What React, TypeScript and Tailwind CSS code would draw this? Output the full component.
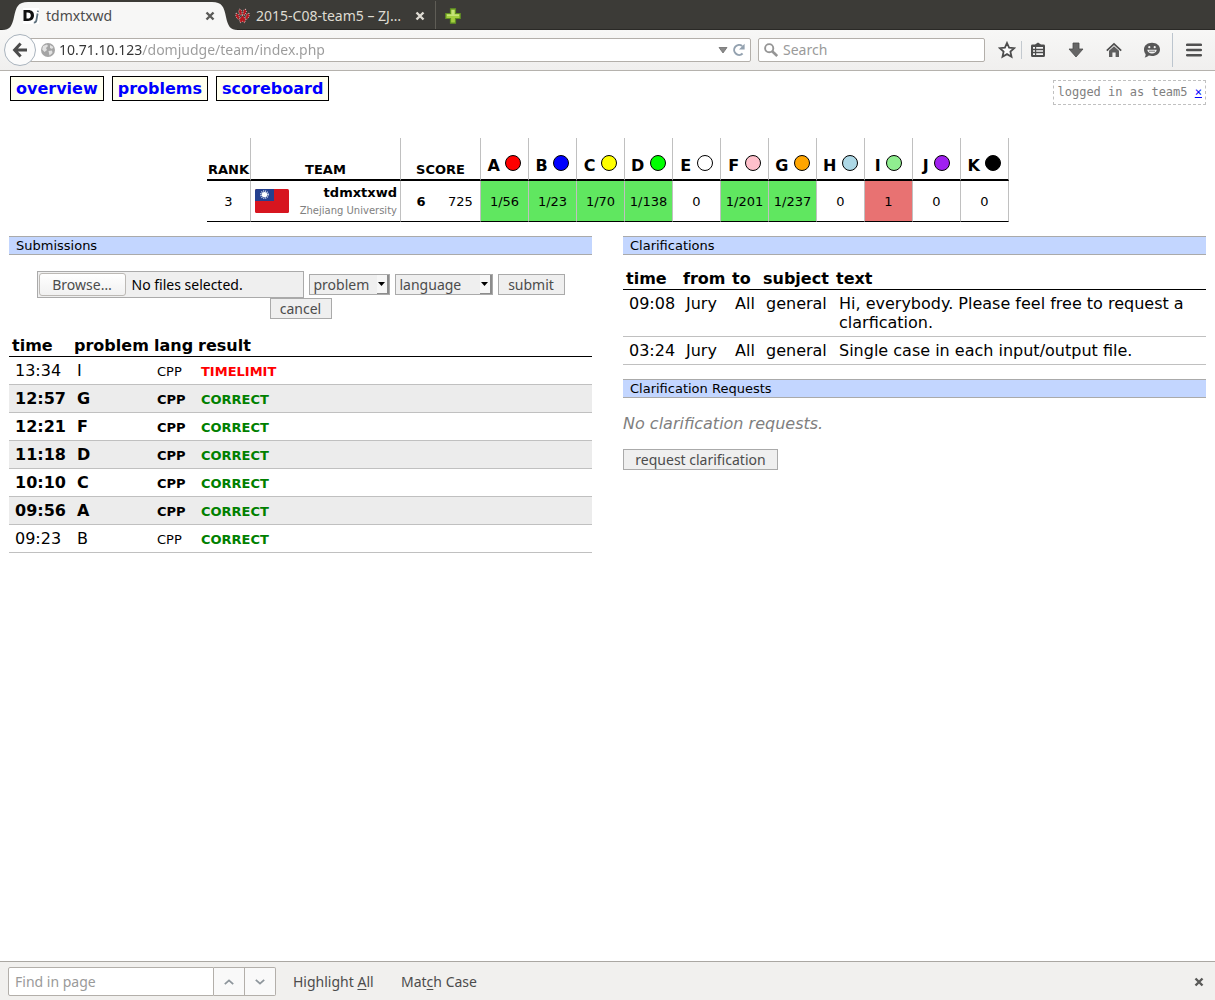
import React, { useRef, useState } from "react";

const teamProblems = [
  { label: "A", color: "#ff0000", result: "1/56", status: "correct" },
  { label: "B", color: "#0000ff", result: "1/23", status: "correct" },
  { label: "C", color: "#ffff00", result: "1/70", status: "correct" },
  { label: "D", color: "#00ff00", result: "1/138", status: "correct" },
  { label: "E", color: "#ffffff", result: "0", status: "none" },
  { label: "F", color: "#ffc0cb", result: "1/201", status: "correct" },
  { label: "G", color: "#ffa500", result: "1/237", status: "correct" },
  { label: "H", color: "#add8e6", result: "0", status: "none" },
  { label: "I", color: "#90ee90", result: "1", status: "incorrect" },
  { label: "J", color: "#a020f0", result: "0", status: "none" },
  { label: "K", color: "#000000", result: "0", status: "none" },
];

const statusClass: Record<string, string> = {
  correct: "bg-[#60e760]",
  incorrect: "bg-[#e87272]",
  none: "bg-white",
};

const submissions = [
  { time: "13:34", problem: "I", lang: "CPP", result: "TIMELIMIT", unseen: false },
  { time: "12:57", problem: "G", lang: "CPP", result: "CORRECT", unseen: true },
  { time: "12:21", problem: "F", lang: "CPP", result: "CORRECT", unseen: true },
  { time: "11:18", problem: "D", lang: "CPP", result: "CORRECT", unseen: true },
  { time: "10:10", problem: "C", lang: "CPP", result: "CORRECT", unseen: true },
  { time: "09:56", problem: "A", lang: "CPP", result: "CORRECT", unseen: true },
  { time: "09:23", problem: "B", lang: "CPP", result: "CORRECT", unseen: false },
];

const clarifications = [
  {
    time: "09:08",
    from: "Jury",
    to: "All",
    subject: "general",
    text: "Hi, everybody. Please feel free to request a clarfication.",
  },
  {
    time: "03:24",
    from: "Jury",
    to: "All",
    subject: "general",
    text: "Single case in each input/output file.",
  },
];

const CloseIcon = ({ color }: { color: string }) => (
  <svg width="10" height="10" viewBox="0 0 10 10">
    <path d="M1.5 1.5L8.5 8.5M8.5 1.5L1.5 8.5" stroke={color} strokeWidth="2.4" />
  </svg>
);

const TabBar = () => (
  <div className="flex h-[30px] items-end border-b border-[#2a2926] bg-[#3c3b37] text-sm">
    <div className="relative z-10 flex h-7 w-[232px] shrink-0 items-center pl-[23px] pr-[17px] pt-0.5">
      <svg
        className="absolute left-0 top-0"
        width="240"
        height="29"
        viewBox="0 0 240 29"
      >
        <path
          d="M2 29C10 29 12 25 14 16C16 6 18 1 28 1H212C222 1 224 6 226 16C228 25 230 29 238 29Z"
          fill="#f7f7f6"
        />
      </svg>
      <svg className="relative" width="17" height="16" viewBox="0 0 17 16">
        <rect width="16" height="16" fill="#fff" />
        <path
          d="M0.5 2H5.2C9 2 11 4.1 11 7.3C11 10.7 9 13 5 13H0.5ZM3.5 4.4V10.6H4.4C6.8 10.6 7.8 9.3 7.8 7.4C7.8 5.5 6.8 4.4 4.6 4.4Z"
          fill="#111"
        />
        <path
          d="M14.6 5.5L13.4 12.4Q13 14.7 10.8 14.6M15 2.6L14.8 4"
          stroke="#60737f"
          strokeWidth="1.8"
          fill="none"
        />
      </svg>
      <span className="relative ml-1.5 flex-1 text-[#4c4c4c]">tdmxtxwd</span>
      <button aria-label="Close tab" className="relative">
        <CloseIcon color="#5a5a58" />
      </button>
    </div>
    <div className="flex h-7 w-[204px] shrink-0 items-center border-r border-[#5f5d56] pl-[3px] pr-[10px] pt-0.5">
      <svg width="15" height="16" viewBox="0 0 15 16">
        <g fill="#b3161d" stroke="#f0dada" strokeWidth="0.8" strokeDasharray="1 1.2">
          <path d="M4.6 1L6.6 2.4L7.2 6.8L5 7.2L3.6 3.6Z" />
          <path d="M10.4 1L11.4 3.6L10 7.2L7.8 6.8L8.4 2.4Z" />
          <path d="M1 5L3.4 6.4L4.8 10L3.2 11.4L0.8 8.6Z" />
          <path d="M14 5L14.2 8.6L11.8 11.4L10.2 10L11.6 6.4Z" />
          <path d="M7.5 7.4L10.6 11L9.8 14.8L7.5 13.4L5.2 14.8L4.4 11Z" />
        </g>
      </svg>
      <span className="ml-1.5 flex-1 whitespace-nowrap text-[#dfdbd2]">2015-C08-team5 – ZJ…</span>
      <button aria-label="Close tab">
        <CloseIcon color="#dedbd3" />
      </button>
    </div>
    <button aria-label="New tab" className="ml-[9px] mb-[5px]">
      <svg width="16" height="16" viewBox="0 0 16 16">
        <path
          d="M5.5 0.8H10.5V5.5H15.2V10.5H10.5V15.2H5.5V10.5H0.8V5.5H5.5Z"
          fill="#a4cf3f"
          stroke="#5f8f22"
          strokeWidth="1.2"
        />
        <path d="M6.6 2H9.4V6.6H14V8H2V6.6H6.6Z" fill="#c5e379" />
      </svg>
    </button>
  </div>
);

const ToolbarIcons = () => (
  <div className="flex shrink-0 items-center text-[#4d4d4d]">
    <button aria-label="Bookmark this page" className="flex w-[27px] justify-center">
      <svg width="18" height="18" viewBox="0 0 18 18">
        <path
          d="M9 2L11.1 6.7L16.2 7.2L12.4 10.6L13.5 15.7L9 13.1L4.5 15.7L5.6 10.6L1.8 7.2L6.9 6.7Z"
          fill="#fbfbfb"
          stroke="currentColor"
          strokeWidth="1.8"
        />
      </svg>
    </button>
    <div className="mx-px h-[18px] w-px bg-[#c3c9cf]" />
    <button aria-label="Bookmarks" className="flex w-[30px] justify-center">
      <svg width="16" height="16" viewBox="0 0 16 16">
        <path d="M5 2.6L8 0.5L11 2.6H13.5Q15 2.6 15 4V13.5Q15 15 13.5 15H2.5Q1 15 1 13.5V4Q1 2.6 2.5 2.6Z" fill="currentColor" />
        <path d="M3 5.8H5M6.2 5.8H13M3 9H5M6.2 9H13M3 12.2H5M6.2 12.2H13" stroke="#f5f5f5" strokeWidth="1.7" />
      </svg>
    </button>
    <button aria-label="Downloads" className="ml-1 flex w-[38px] justify-center">
      <svg width="16" height="16" viewBox="0 0 16 16">
        <path d="M5 1H11V7H15L8 15L1 7H5Z" fill="#666" stroke="#4a4a4a" strokeWidth="0.8" />
      </svg>
    </button>
    <button aria-label="Home" className="flex w-[38px] justify-center">
      <svg width="16" height="16" viewBox="0 0 16 16">
        <path d="M0.8 8.6L8 1.8L15.2 8.6" stroke="currentColor" strokeWidth="1.7" fill="none" />
        <path d="M3 8.8L8 4.2L13 8.8V15H9.6V10.5H6.4V15H3Z" fill="#5e5e5e" />
      </svg>
    </button>
    <button aria-label="Hello" className="flex w-[38px] justify-center">
      <svg width="18" height="16" viewBox="0 0 18 16">
        <path d="M9 0.8C13.6 0.8 17 3.6 17 7.4C17 11.2 13.6 14 9 14C7.8 14 6.8 13.8 5.8 13.5C4.8 14.6 3.4 15.3 1.6 15.4C2.4 14.5 2.7 13.4 2.6 12C1.6 10.8 1 9.2 1 7.4C1 3.6 4.4 0.8 9 0.8Z" fill="#585858" />
        <circle cx="6.3" cy="5.2" r="1.1" fill="#f3f3f3" />
        <circle cx="11.7" cy="5.2" r="1.1" fill="#f3f3f3" />
        <path d="M4.2 7.8H13.8Q12.8 11.6 9 11.6Q5.2 11.6 4.2 7.8Z" fill="#f3f3f3" />
        <path d="M6 9.2H12" stroke="#585858" strokeWidth="0.8" />
      </svg>
    </button>
    <div className="ml-px h-[34px] w-px bg-[#bcc5ce]" />
    <button aria-label="Open menu" className="flex w-[42px] justify-center">
      <svg width="16" height="14" viewBox="0 0 16 14">
        <path d="M1.2 1.8H14.8M1.2 7H14.8M1.2 12.2H14.8" stroke="#515151" strokeWidth="2.6" strokeLinecap="round" />
      </svg>
    </button>
  </div>
);

const Toolbar = () => {
  const [url, setUrl] = useState("10.71.10.123/domjudge/team/index.php");

  return (
    <div className="flex h-[41px] items-center border-b border-[#b5b2ad] bg-linear-to-b from-[#f7f7f6] to-[#f0efee] pl-1">
      <button
        aria-label="Back"
        className="relative z-10 flex size-8 shrink-0 items-center justify-center rounded-full border border-[#a9b3bd] bg-[#fbfbfb]"
      >
        <svg width="16" height="16" viewBox="0 0 16 16">
          <path d="M8.6 1.5L2.6 8L8.6 14.5M2.8 8H15" stroke="#4b4b4b" strokeWidth="3" fill="none" />
        </svg>
      </button>
      <div className="-ml-2 flex h-6 flex-1 items-center rounded-r-xs border border-[#b3afaa] bg-white pl-[11px]">
        <svg className="shrink-0" width="16" height="16" viewBox="0 0 16 16">
          <circle cx="8" cy="8" r="7" fill="#a5a5a5" />
          <path d="M3 4L7 2.4L8 4L6 6L7 8L4.5 10L2.2 7.5ZM10 3L13.5 5L12 7L10 6ZM8.5 9L12 8.5L12.5 11L9.5 13.6Z" fill="#e2e2e2" />
        </svg>
        <input
          aria-label="Address"
          value={url}
          onChange={(e) => setUrl(e.target.value)}
          className="ml-[3px] min-w-0 flex-1 bg-[linear-gradient(90deg,#333_83px,#9a9a9a_83px)] bg-clip-text text-sm text-transparent outline-none"
        />
        <button aria-label="Show history">
          <svg width="10" height="8" viewBox="0 0 10 8">
            <path d="M1 1.5H9L5 7Z" fill="#8a8a8a" stroke="#6f6f6f" strokeWidth="0.8" />
          </svg>
        </button>
        <button aria-label="Reload" className="mx-1">
          <svg width="14" height="14" viewBox="0 0 14 14">
            <path d="M10.6 10.6A5 5 0 1 1 10.2 3" stroke="#93a1af" strokeWidth="2" fill="none" />
            <path d="M12.6 0.8V6.4H7Z" fill="#93a1af" />
          </svg>
        </button>
      </div>
      <div className="ml-[7px] mr-2 flex h-6 w-[227px] shrink-0 items-center rounded-xs border border-[#b3afaa] bg-white pl-[5px]">
        <svg className="shrink-0" width="14" height="14" viewBox="0 0 14 14">
          <circle cx="5.2" cy="5.2" r="4.1" stroke="#959595" strokeWidth="1.9" fill="none" />
          <path d="M8.2 8.2L13.2 13" stroke="#959595" strokeWidth="2.6" />
        </svg>
        <input
          aria-label="Search"
          placeholder="Search"
          className="ml-[5px] w-full min-w-0 text-sm text-[#333] outline-none placeholder:text-[#9a9a9a]"
        />
      </div>
      <ToolbarIcons />
    </div>
  );
};

const navLinkClass =
  "border border-black bg-[#ffffee] px-[5px] py-0.5 font-bold text-[#0000ff]";

const Header = () => (
  <header className="flex items-start justify-between">
    <nav className="flex gap-2 pl-px">
      <a href="#overview" className={navLinkClass}>overview</a>
      <a href="#problems" className={navLinkClass}>problems</a>
      <a href="#scoreboard" className={navLinkClass}>scoreboard</a>
    </nav>
    <div className="mt-1 whitespace-pre border border-dashed border-[#c0c0c0] px-[3px] py-0.5 font-['DejaVu_Sans_Mono',monospace] text-xs leading-[19px] text-[#808080]">
      logged in as team5 <a href="#logout" className="text-[#0000ff] underline">×</a>
    </div>
  </header>
);

const Flag = () => (
  <svg className="shrink-0" width="34" height="24" viewBox="0 0 34 24">
    <rect width="34" height="24" rx="1.5" fill="#d7151f" />
    <path d="M1.5 0H19V12H0V1.5Q0 0 1.5 0Z" fill="#25408f" />
    <circle cx="9.5" cy="5.6" r="3.6" stroke="#c9d0e6" strokeWidth="1.8" strokeDasharray="1 0.9" fill="none" />
    <circle cx="9.5" cy="5.6" r="2.7" fill="#fff" />
  </svg>
);

const headCell = "border-b-2 border-b-black border-r border-r-[#c0c0c0] align-bottom";
const bodyCell = "border-b border-b-black text-center";

const Scoreboard = () => (
  <div className="mt-[33px] flex justify-center pl-px">
    <table className="w-[802px] table-fixed border-separate border-spacing-0 text-[13px] leading-[15px]">
      <colgroup>
        <col className="w-11" />
        <col className="w-[150px]" />
        <col className="w-10" />
        <col className="w-10" />
        {teamProblems.map((p) => (
          <col key={p.label} className="w-12" />
        ))}
      </colgroup>
      <thead>
        <tr className="h-[43px]">
          <th className={`${headCell} pb-0.5`}>RANK</th>
          <th className={`${headCell} pb-0.5`}>TEAM</th>
          <th colSpan={2} className={`${headCell} pb-0.5`}>SCORE</th>
          {teamProblems.map((p) => (
            <th key={p.label} className={`${headCell} whitespace-nowrap pb-1 text-base leading-[19px]`}>
              {p.label}{" "}
              <svg className="inline-block align-baseline" width="16" height="16" viewBox="0 0 16 16">
                <circle cx="8" cy="8" r="7.5" fill={p.color} stroke="#000" />
              </svg>
            </th>
          ))}
        </tr>
      </thead>
      <tbody>
        <tr className="h-[41px]">
          <td className={`${bodyCell} border-r border-r-[#c0c0c0]`}>3</td>
          <td className={`${bodyCell} border-r border-r-[#c0c0c0]`}>
            <div className="flex items-center justify-between pl-1 pr-[3px]">
              <Flag />
              <div className="whitespace-nowrap pt-px text-right leading-[18px]">
                <div className="font-bold">tdmxtxwd</div>
                <div className="text-[10px] leading-[18px] text-[#808080]">Zhejiang University</div>
              </div>
            </div>
          </td>
          <td className={`${bodyCell} font-bold`}>6</td>
          <td className={`${bodyCell} border-r border-r-[#c0c0c0]`}>725</td>
          {teamProblems.map((p) => (
            <td key={p.label} className={`${bodyCell} border-r border-r-[#c0c0c0] ${statusClass[p.status]}`}>
              {p.result}
            </td>
          ))}
        </tr>
      </tbody>
    </table>
  </div>
);

const SectionTitle = ({ children }: { children: React.ReactNode }) => (
  <h3 className="border-y border-[#aaaaaa] bg-[#c3d6ff] px-[7px] text-[13px] leading-[17px]">
    {children}
  </h3>
);

const controlClass =
  "h-[21px] border border-[#aaaaaa] bg-[#efefef] font-['Noto_Sans',sans-serif] text-sm leading-[19px] text-[#4c4c4c]";

const SelectBox = ({ name, width }: { name: string; width: string }) => (
  <div className={`relative h-[21px] ${width}`}>
    <select aria-label={name} className={`${controlClass} block w-full appearance-none pl-1 outline-none`}>
      <option>{name}</option>
    </select>
    <span className="pointer-events-none absolute right-px top-px flex h-[19px] w-3 items-center justify-center border-b border-r-2 border-[#8c8c8c] bg-[#f6f6f6]">
      <svg width="7" height="4" viewBox="0 0 7 4">
        <path d="M0 0H7L3.5 4Z" fill="#000" />
      </svg>
    </span>
  </div>
);

const SubmitForm = () => {
  const fileInput = useRef<HTMLInputElement>(null);

  return (
    <form className="mt-4 flex flex-wrap items-center justify-center gap-x-[5px]" onSubmit={(e) => e.preventDefault()}>
      <div className="flex h-[27px] w-[267px] items-center border border-[#aaaaaa] bg-[#efefef] px-px font-['Noto_Sans',sans-serif] text-sm">
        <input ref={fileInput} type="file" multiple aria-label="Source files" className="hidden" />
        <button
          type="button"
          onClick={() => fileInput.current?.click()}
          className="h-[23px] w-[87px] rounded-[3px] border border-[#bcb9b5] bg-linear-to-b from-white to-[#f1f1f1] leading-[19px] text-[#4c4c4c]"
        >
          Browse…
        </button>
        <span className="ml-1.5">No files selected.</span>
      </div>
      <SelectBox name="problem" width="w-[81px]" />
      <SelectBox name="language" width="w-[98px]" />
      <button type="submit" className={`${controlClass} w-[67px]`}>submit</button>
      <button type="reset" className={`${controlClass} w-[62px]`}>cancel</button>
    </form>
  );
};

const listHead = "border-b border-black pb-px pl-[3px] text-left font-bold";
const listCell = "border-b border-[#c0c0c0] py-1 pl-1.5 align-top";
const smallCell = "border-b border-[#c0c0c0] pt-[5px] pb-[3px] pl-1.5 align-top text-[13px]";

const Submissions = () => (
  <section>
    <SectionTitle>Submissions</SectionTitle>
    <SubmitForm />
    <table className="mt-[17px] w-full table-fixed border-separate border-spacing-0">
      <thead>
        <tr>
          <th className={`${listHead} w-[62px]`}>time</th>
          <th className={`${listHead} w-20`}>problem</th>
          <th className={`${listHead} w-11`}>lang</th>
          <th className={listHead}>result</th>
        </tr>
      </thead>
      <tbody>
        {submissions.map((s, i) => (
          <tr key={s.time} className={`${i % 2 ? "bg-[#ececec]" : "bg-white"} ${s.unseen ? "font-bold" : ""}`}>
            <td className={listCell}>{s.time}</td>
            <td className={listCell}>{s.problem}</td>
            <td className={smallCell}>{s.lang}</td>
            <td
              className={`${smallCell} font-bold ${
                s.result === "CORRECT" ? "text-[#008000]" : "text-[#ff0000]"
              }`}
            >
              {s.result}
            </td>
          </tr>
        ))}
      </tbody>
    </table>
  </section>
);

const Clarifications = () => (
  <section>
    <SectionTitle>Clarifications</SectionTitle>
    <table className="mt-3.5 mb-3.5 w-full table-fixed border-separate border-spacing-0">
      <thead>
        <tr>
          <th className={`${listHead} w-[57px]`}>time</th>
          <th className={`${listHead} w-[49px]`}>from</th>
          <th className={`${listHead} w-[31px]`}>to</th>
          <th className={`${listHead} w-[73px]`}>subject</th>
          <th className={listHead}>text</th>
        </tr>
      </thead>
      <tbody>
        {clarifications.map((c) => (
          <tr key={c.time}>
            <td className={listCell}>{c.time}</td>
            <td className={listCell}>{c.from}</td>
            <td className={listCell}>{c.to}</td>
            <td className={listCell}>{c.subject}</td>
            <td className={listCell}>{c.text}</td>
          </tr>
        ))}
      </tbody>
    </table>
    <SectionTitle>Clarification Requests</SectionTitle>
    <p className="my-4 italic text-[#808080]">No clarification requests.</p>
    <button className={`${controlClass} w-[155px]`}>request clarification</button>
  </section>
);

const FindBar = () => (
  <div className="flex h-[39px] items-center border-t border-[#aaa7a2] bg-[#f1f0ee] px-2 pt-px text-sm text-[#4c4c4c]">
    <input
      aria-label="Find in page"
      placeholder="Find in page"
      className="h-[29px] w-[206px] rounded-l-xs border border-[#b3afaa] bg-white px-1.5 outline-none placeholder:text-[#9a9a9a]"
    />
    <button aria-label="Previous" className="flex h-[29px] w-[31px] items-center justify-center border-y border-r border-[#b3afaa] bg-[#f9f9f9]">
      <svg width="10" height="6" viewBox="0 0 10 6">
        <path d="M0.8 5.2L5 1.4L9.2 5.2" stroke="#8e969c" strokeWidth="1.8" fill="none" />
      </svg>
    </button>
    <button aria-label="Next" className="flex h-[29px] w-[31px] items-center justify-center rounded-r-xs border-y border-r border-[#b3afaa] bg-[#f9f9f9]">
      <svg width="10" height="6" viewBox="0 0 10 6">
        <path d="M0.8 0.8L5 4.6L9.2 0.8" stroke="#8e969c" strokeWidth="1.8" fill="none" />
      </svg>
    </button>
    <button className="ml-[17px] w-[108px] text-left">
      Highlight <span className="underline underline-offset-2">A</span>ll
    </button>
    <button>
      Mat<span className="underline underline-offset-2">c</span>h Case
    </button>
    <button aria-label="Close find bar" className="ml-auto mr-[3px]">
      <CloseIcon color="#5a5a58" />
    </button>
  </div>
);

const App = () => {
  return (
    <div className="flex min-h-screen flex-col bg-white font-['Noto_Sans',sans-serif]">
      <TabBar />
      <Toolbar />
      <main className="flex-1 px-[9px] pt-[5px] font-['DejaVu_Sans',sans-serif] text-base leading-[19px] text-black">
        <Header />
        <Scoreboard />
        <div className="mt-3.5 grid grid-cols-2 gap-[31px]">
          <Submissions />
          <Clarifications />
        </div>
      </main>
      <FindBar />
    </div>
  );
};

export default App;
